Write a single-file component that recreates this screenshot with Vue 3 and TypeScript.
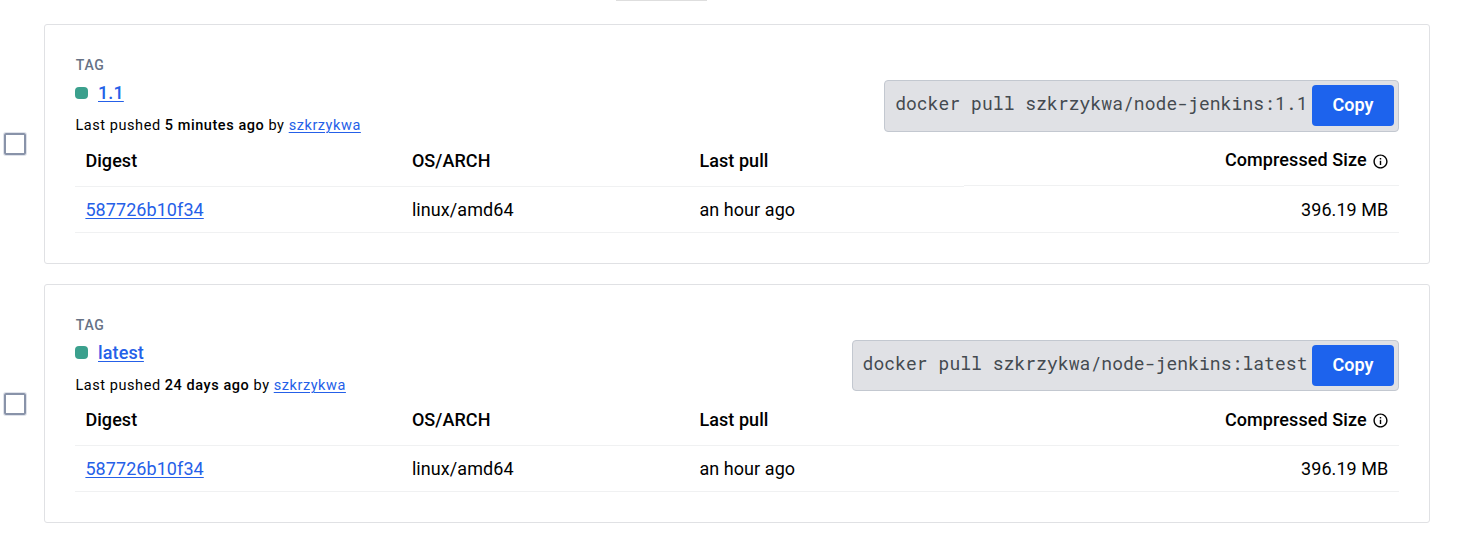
<script setup lang="ts">
interface Tag {
  name: string
  pushed: string
  user: string
  digest: string
  arch: string
  lastPull: string
  size: string
}

const tags: Tag[] = [
  { name: '1.1', pushed: '5 minutes ago', user: 'szkrzykwa', digest: '587726b10f34', arch: 'linux/amd64', lastPull: 'an hour ago', size: '396.19 MB' },
  { name: 'latest', pushed: '24 days ago', user: 'szkrzykwa', digest: '587726b10f34', arch: 'linux/amd64', lastPull: 'an hour ago', size: '396.19 MB' },
]
</script>

<template>
  <main class="page">
    <div class="tab-edge"></div>
    <section v-for="(tag, i) in tags" :key="tag.name" class="entry" :class="{ compact: i > 0 }">
      <span class="checkbox" role="checkbox" aria-checked="false"></span>
      <article class="card">
        <header class="head">
          <div class="info">
            <div class="label">TAG</div>
            <div class="title">
              <span class="status"></span>
              <a class="name">{{ tag.name }}</a>
            </div>
            <div class="pushed">Last pushed <b>{{ tag.pushed }}</b> by <a>{{ tag.user }}</a></div>
          </div>
          <div class="command">
            <code>docker pull szkrzykwa/node-jenkins:{{ tag.name }}</code>
            <button type="button">Copy</button>
          </div>
        </header>
        <div class="table">
          <div class="row th">
            <span>Digest</span>
            <span>OS/ARCH</span>
            <span>Last pull</span>
            <span class="size">
              <span class="size-text">Compressed Size</span>
              <svg width="17" height="17" viewBox="0 0 24 24" fill="currentColor">
                <path d="M11 7h2v2h-2zm0 4h2v6h-2zm1-9C6.480 2 2 6.480 2 12s4.480 10 10 10 10-4.480 10-10S17.520 2 12 2zm0 18c-4.410 0-8-3.590-8-8s3.590-8 8-8 8 3.590 8 8-3.590 8-8 8z" />
              </svg>
            </span>
          </div>
          <div class="row td">
            <span><a class="digest">{{ tag.digest }}</a></span>
            <span>{{ tag.arch }}</span>
            <span>{{ tag.lastPull }}</span>
            <span class="size">{{ tag.size }}</span>
          </div>
        </div>
      </article>
    </section>
  </main>
</template>

<style>
body {
  background: #fff;
}
</style>

<style scoped>
.page {
  box-sizing: border-box;
  width: 1467px;
  height: 555px;
  overflow: hidden;
  font-family: Roboto, 'Liberation Sans', sans-serif;
  font-size: 18px;
  color: #000;
}
.tab-edge {
  width: 91px;
  height: 1px;
  margin: 0 0 23px 616px;
  background: #dedede;
}
.entry {
  display: flex;
  align-items: center;
  height: 240px;
  margin-bottom: 20px;
}
.entry.compact {
  height: 239px;
}
.checkbox {
  box-sizing: border-box;
  flex: none;
  width: 22px;
  height: 22px;
  margin: 0 18px 0 4px;
  border: 2px solid #8993a9;
  border-radius: 2px;
  box-shadow: 0 0 0 1px #dfe2ea;
}
.compact .checkbox {
  margin-top: 1px;
}
.card {
  box-sizing: border-box;
  width: 1386px;
  height: 100%;
  padding: 30px;
  border: 1px solid #e0e1e4;
  border-radius: 3px;
}
.head {
  display: flex;
  justify-content: space-between;
  height: 82px;
}
.compact .head {
  height: 81px;
}
a {
  color: #2560e8;
  text-decoration: underline;
  text-decoration-thickness: 1px;
  text-underline-offset: 2px;
}
.label {
  height: 20px;
  padding-left: 0.8px;
  font-size: 14px;
  font-weight: 500;
  line-height: 20px;
  letter-spacing: 0.75px;
  color: #677285;
}
.title {
  display: flex;
  align-items: center;
  height: 34px;
}
.status {
  width: 13px;
  height: 12px;
  margin: 2px 10px 0 0;
  border-radius: 4px;
  background: #3ba08d;
}
.compact .status {
  height: 13px;
  margin-top: 1px;
}
.name {
  font-weight: 500;
  letter-spacing: 0.12px;
}
.pushed {
  height: 26px;
  padding: 4px 0 0 0.5px;
  font-size: 14.5px;
  line-height: 26px;
  letter-spacing: 0.56px;
  white-space: pre;
}
.pushed b {
  font-weight: 500;
}
.command {
  box-sizing: border-box;
  display: flex;
  height: 52px;
  margin-top: 25px;
  padding: 4px 4px 4px 10px;
  border: 1px solid #c3c8d0;
  border-radius: 4px;
  background: #e0e1e5;
}
.compact .command {
  height: 51px;
}
code {
  font-family: 'Roboto Mono', 'Liberation Mono', monospace;
  font-size: 18px;
  line-height: 37px;
  letter-spacing: 0.05px;
  color: #444a50;
  white-space: pre;
}
button {
  box-sizing: border-box;
  width: 82px;
  height: 41px;
  margin-left: 4.5px;
  padding: 0 0 2px;
  border: 0;
  border-radius: 4px;
  background: #1d63ed;
  color: #fff;
  font: 600 18px/39px Roboto, 'Liberation Sans', sans-serif;
}
.row {
  display: grid;
  grid-template-columns: 326.5px 287.5px 275px 1fr;
  letter-spacing: 0.07px;
}
.row > span {
  box-sizing: border-box;
  height: 46px;
  padding-left: 10.4px;
  border-bottom: 1px solid #f0f1f2;
  line-height: 45px;
}
.row.th > span {
  height: 50px;
  line-height: 47px;
  font-weight: 500;
}
.row > .size {
  display: flex;
  justify-content: flex-end;
  gap: 5px;
  padding-right: 10.6px;
}
.row.th > .size {
  height: 49px;
  padding-right: 10.2px;
  line-height: 46px;
  letter-spacing: 0.1px;
}
.compact .row.th > .size {
  height: 50px;
  line-height: 47px;
}
.size svg {
  margin-top: 15.5px;
}
</style>
